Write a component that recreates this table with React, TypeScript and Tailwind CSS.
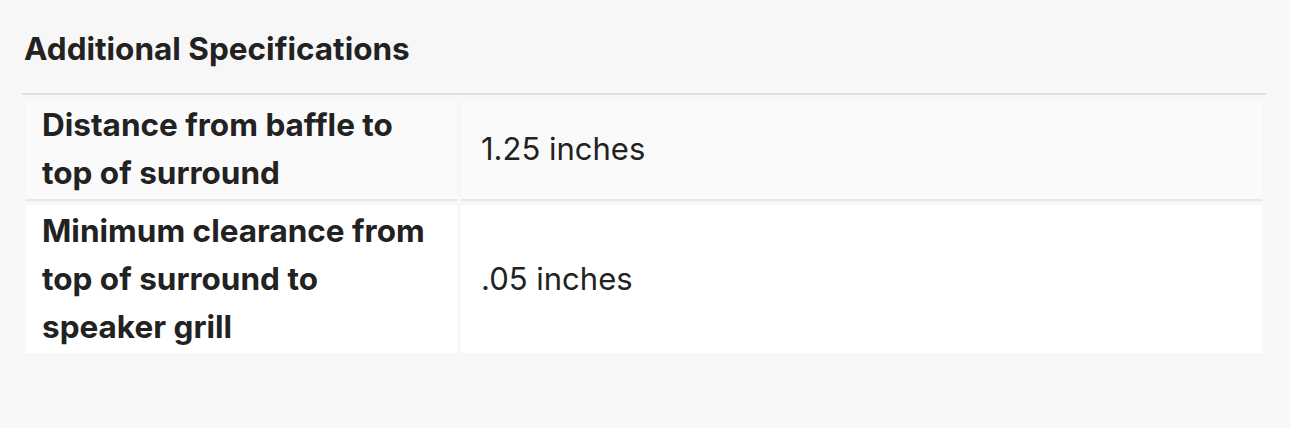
const rows = [
  { label: "Distance from baffle to top of surround", value: "1.25 inches", bg: "bg-[#fafafa]", border: "border-b-2 border-[#e6e6e6]" },
  { label: "Minimum clearance from top of surround to speaker grill", value: ".05 inches", bg: "bg-white", border: "" },
];

export default function App() {
  return (
    <div className="min-h-[428px] bg-[#f7f7f7] px-[22px] pt-[29px] font-['Inter','Liberation_Sans',sans-serif] text-[#222]">
      <h2 className="pl-[2px] text-[31.5px] font-bold leading-[40px]">Additional Specifications</h2>
      <table className="mt-[24px] w-[1244px] border-separate border-spacing-1 border-t-2 border-[#e0e0e0]">
        <tbody>
          {rows.map((r) => (
            <tr key={r.value}>
              <th className={`w-[431px] pl-[16px] pr-[20px] py-[2px] text-left align-middle text-[31.5px] font-bold leading-[48px] ${r.bg} ${r.border}`}>
                {r.label}
              </th>
              <td className={`pl-[20px] pr-4 py-[2px] align-middle text-[31px] font-normal leading-[48px] ${r.bg} ${r.border}`}>
                {r.value}
              </td>
            </tr>
          ))}
        </tbody>
      </table>
    </div>
  );
}
